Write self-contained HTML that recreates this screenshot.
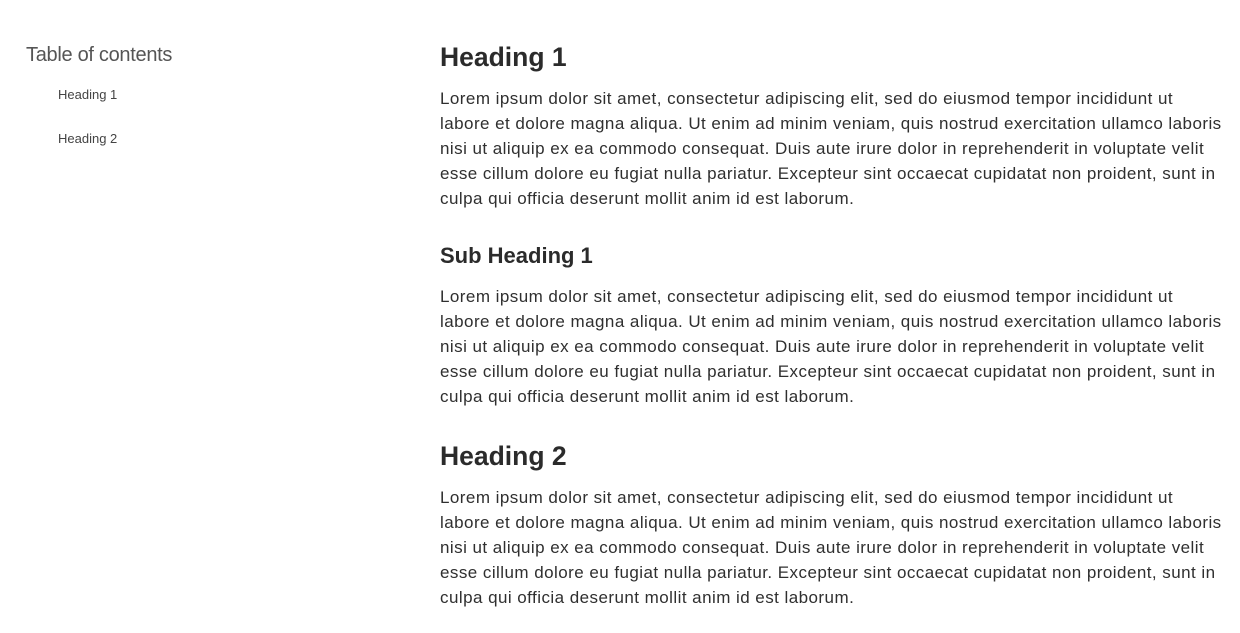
<!DOCTYPE html>
<html><head><meta charset="utf-8"><style>
html,body{margin:0;padding:0;background:#fff;width:1240px;height:633px;overflow:hidden;font-family:"Liberation Sans",sans-serif;color:#333;}
.a{position:absolute;white-space:nowrap;}
.toc{left:26px;top:42px;font-size:20px;line-height:26px;font-weight:300;color:#555;letter-spacing:-0.3px}
.ti{left:58px;font-size:13px;line-height:18px;color:#444}
.h1{left:440px;font-size:26.5px;line-height:32px;font-weight:bold;color:#2b2b2b}
.h2{left:440px;font-size:22px;line-height:28px;font-weight:bold;color:#2b2b2b}
.p{left:440px;font-size:17px;line-height:25px;color:#2f2f2f;letter-spacing:0.45px}
</style></head><body>
<div class="a toc">Table of contents</div>
<div class="a ti" style="top:86px">Heading 1</div>
<div class="a ti" style="top:130px">Heading 2</div>

<div class="a h1" style="top:41px">Heading 1</div>
<div class="a p" style="top:86px">Lorem ipsum dolor sit amet, consectetur adipiscing elit, sed do eiusmod tempor incididunt ut<br>labore et dolore magna aliqua. Ut enim ad minim veniam, quis nostrud exercitation ullamco laboris<br>nisi ut aliquip ex ea commodo consequat. Duis aute irure dolor in reprehenderit in voluptate velit<br>esse cillum dolore eu fugiat nulla pariatur. Excepteur sint occaecat cupidatat non proident, sunt in<br>culpa qui officia deserunt mollit anim id est laborum.</div>

<div class="a h2" style="top:242px">Sub Heading 1</div>
<div class="a p" style="top:284px">Lorem ipsum dolor sit amet, consectetur adipiscing elit, sed do eiusmod tempor incididunt ut<br>labore et dolore magna aliqua. Ut enim ad minim veniam, quis nostrud exercitation ullamco laboris<br>nisi ut aliquip ex ea commodo consequat. Duis aute irure dolor in reprehenderit in voluptate velit<br>esse cillum dolore eu fugiat nulla pariatur. Excepteur sint occaecat cupidatat non proident, sunt in<br>culpa qui officia deserunt mollit anim id est laborum.</div>

<div class="a h1" style="top:440px">Heading 2</div>
<div class="a p" style="top:485px">Lorem ipsum dolor sit amet, consectetur adipiscing elit, sed do eiusmod tempor incididunt ut<br>labore et dolore magna aliqua. Ut enim ad minim veniam, quis nostrud exercitation ullamco laboris<br>nisi ut aliquip ex ea commodo consequat. Duis aute irure dolor in reprehenderit in voluptate velit<br>esse cillum dolore eu fugiat nulla pariatur. Excepteur sint occaecat cupidatat non proident, sunt in<br>culpa qui officia deserunt mollit anim id est laborum.</div>
</body></html>
